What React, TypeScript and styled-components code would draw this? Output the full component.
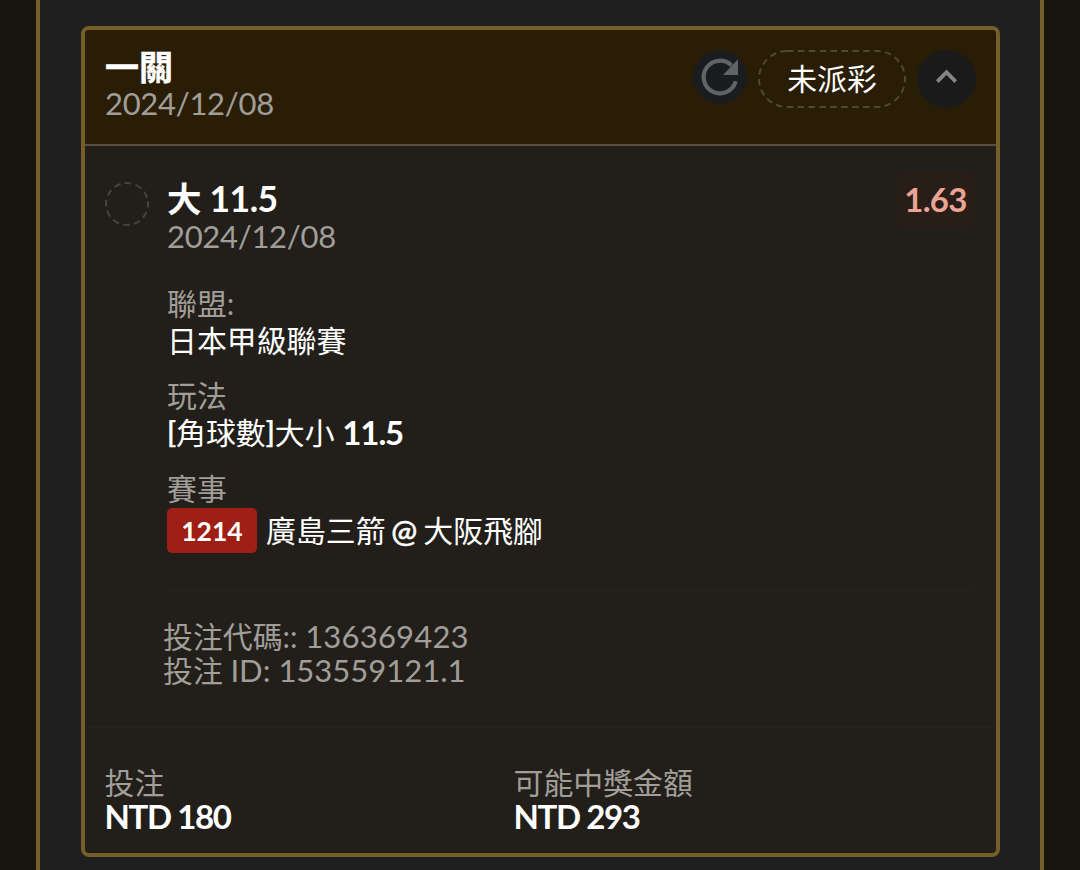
import styled, { createGlobalStyle } from 'styled-components';

const GlobalStyle = createGlobalStyle`
  * {
    box-sizing: border-box;
  }

  html,
  body {
    margin: 0;
    overflow: hidden;
    background: #17140d;
  }
`;

const Page = styled.div`
  height: 870px;
  padding: 0 36px;
  overflow: hidden;
  background: #17140d;
  color: #fff;
  font-family: Lato, 'Noto Sans CJK TC', sans-serif;
`;

const Panel = styled.main`
  height: 870px;
  padding: 26px 40px 0 41px;
  background: #1f1f1f;
  border: solid #765e2a;
  border-width: 0 4px;
`;

const Card = styled.article`
  display: flex;
  flex-direction: column;
  height: 831px;
  overflow: hidden;
  background: #221f1a;
  border: 4px solid #765e2a;
  border-radius: 8px;
`;

const CardHeader = styled.header`
  display: flex;
  justify-content: space-between;
  height: 116px;
  padding: 19px 20px 0 20px;
  background: #291e05;
  border-bottom: 2px solid #57503f;
`;

const Line = styled.div<{ $h: number; $muted?: boolean }>`
  display: flex;
  align-items: center;
  height: ${({ $h }) => $h}px;
  color: ${({ $muted }) => ($muted ? '#a19e99' : '#fff')};
  font-size: 31px;
  line-height: ${({ $h }) => $h}px;
  white-space: pre;
`;

const Title = styled.h2`
  height: 36px;
  margin: 0;
  font-size: 34px;
  font-weight: 700;
  line-height: 36px;
  -webkit-text-stroke: 0.5px #fff;
`;

const DateText = styled(Line)`
  letter-spacing: -0.3px;
`;

const Cjk = styled.span`
  font-size: 29.9px;
`;

const Medium = styled.span`
  font-size: 29.5px;
  font-weight: 500;
  -webkit-text-stroke: 0.5px #fff;
`;

const AtSign = styled(Medium)`
  margin: 0 -1.5px 0 -2px;
  font-size: 31px;
`;

const Strong = styled.strong<{ $size?: number; $spacing?: number }>`
  font-size: ${({ $size }) => $size ?? 33}px;
  font-weight: 700;
  letter-spacing: ${({ $spacing }) => $spacing ?? -1.4}px;
`;

const Actions = styled.div`
  display: flex;
  align-items: flex-start;
  padding-top: 1px;
`;

const ReloadButton = styled.button`
  width: 54px;
  height: 54px;
  margin-right: 11px;
  padding: 0;
  background: #1b1c1d;
  border: 0;
  border-radius: 50%;
`;

const StatusPill = styled.div`
  display: grid;
  width: 148px;
  height: 58px;
  margin-right: 11px;

  > * {
    grid-area: 1 / 1;
  }
`;

const StatusText = styled.span`
  font-size: 29.8px;
  line-height: 58px;
  text-align: center;
`;

const ToggleButton = styled.button`
  width: 59px;
  height: 58px;
  padding: 0;
  background: #1a1a1b;
  border: 0;
  border-radius: 50%;
`;

const Selection = styled.section`
  display: grid;
  grid-template-columns: 62px 1fr;
  height: 580px;
  padding: 34px 25px 0 20px;
`;

const Marker = styled.svg`
  display: block;
  margin-top: 2px;
`;

const SelectionHead = styled.div`
  display: flex;
  justify-content: space-between;
  height: 105px;
`;

const Odds = styled.span`
  width: 77px;
  height: 55px;
  margin: -8px -3px 0 0;
  background: #291d17;
  border-radius: 6px;
  color: #eba495;
  font-size: 33px;
  font-weight: 700;
  letter-spacing: -0.7px;
  line-height: 54px;
  text-align: center;
`;

const Field = styled.div`
  height: 92px;
`;

const MatchCode = styled.span`
  width: 90px;
  height: 45px;
  margin-right: 9px;
  background: #9f1f15;
  border-radius: 5px;
  font-size: 26.5px;
  font-weight: 700;
  line-height: 47px;
  text-align: center;
`;

const Divider = styled.hr`
  height: 2px;
  margin: 36px -1px 0 0;
  background: #25221d;
  border: 0;
`;

const TicketInfo = styled.div`
  margin: 28px 0 0 -4px;
`;

const CardFooter = styled.footer`
  display: grid;
  grid-template-columns: 409px 1fr;
  flex: 1;
  padding: 37px 20px 0 19.5px;
  border-top: 2px solid #25221d;
`;

const TicketCode = styled.span`
  letter-spacing: 0.2px;
`;

const fields = [
  { label: '聯盟:', value: <Cjk>日本甲級聯賽</Cjk> },
  {
    label: '玩法',
    value: (
      <>
        <Medium>[</Medium>
        <Cjk>角球數</Cjk>
        <Medium>]</Medium>
        <Cjk>大小 </Cjk>
        <Strong $spacing={-1.1}>11.5</Strong>
      </>
    ),
  },
];

const totals = [
  { label: '投注', value: 'NTD 180' },
  { label: '可能中獎金額', value: 'NTD 293' },
];

export default function App() {
  return (
    <>
      <GlobalStyle />
      <Page>
        <Panel>
          <Card>
            <CardHeader>
              <div>
                <Title>一關</Title>
                <DateText $h={36} $muted>2024/12/08</DateText>
              </div>
              <Actions>
                <ReloadButton aria-label="reload">
                  <svg width="54" height="54" viewBox="0 0 54 54" fill="none">
                    <path d="M42.7 31.3A16.3 16.3 0 1 1 38.5 15.5" stroke="#626365" strokeWidth="4.2" />
                    <path d="M45 9.3V25H30z" fill="#626365" />
                  </svg>
                </ReloadButton>
                <StatusPill>
                  <svg width="148" height="58" viewBox="0 0 148 58" fill="none">
                    <rect x="1" y="1" width="146" height="56" rx="28" stroke="#504735" strokeWidth="2" strokeDasharray="6.5 4.4" />
                  </svg>
                  <StatusText>未派彩</StatusText>
                </StatusPill>
                <ToggleButton aria-label="toggle">
                  <svg width="59" height="58" viewBox="0 0 59 58" fill="none">
                    <path d="M20.3 31.6l9.2-9.4 9.2 9.4" stroke="#848484" strokeWidth="3.8" />
                  </svg>
                </ToggleButton>
              </Actions>
            </CardHeader>

            <Selection>
              <Marker width="44" height="44" viewBox="0 0 44 44" fill="none">
                <circle cx="22" cy="22" r="21" stroke="#45433f" strokeWidth="2" strokeDasharray="6.6 4.4" transform="rotate(-8 22 22)" />
              </Marker>
              <div>
                <SelectionHead>
                  <div>
                    <Line $h={38}>
                      <Strong $size={34.5} $spacing={-0.2}>大 </Strong>
                      <Strong $size={35.5} $spacing={-0.5}>11.5</Strong>
                    </Line>
                    <DateText $h={36} $muted>2024/12/08</DateText>
                  </div>
                  <Odds>1.63</Odds>
                </SelectionHead>
                {fields.map(({ label, value }) => (
                  <Field key={label}>
                    <Line $h={37} $muted><Cjk>{label}</Cjk></Line>
                    <Line $h={36}>{value}</Line>
                  </Field>
                ))}
                <div>
                  <Line $h={39} $muted><Cjk>賽事</Cjk></Line>
                  <Line $h={45}>
                    <MatchCode>1214</MatchCode>
                    <Cjk>廣島三箭 </Cjk>
                    <AtSign>@</AtSign>
                    <Cjk> 大阪飛腳</Cjk>
                  </Line>
                </div>
                <Divider />
                <TicketInfo>
                  <Line $h={34} $muted><Cjk>投注代碼:: </Cjk><TicketCode>136369423</TicketCode></Line>
                  <Line $h={34} $muted><Cjk>投注 </Cjk>ID: 153559121.1</Line>
                </TicketInfo>
              </div>
            </Selection>

            <CardFooter>
              {totals.map(({ label, value }) => (
                <div key={label}>
                  <Line $h={34} $muted><Cjk>{label}</Cjk></Line>
                  <Line $h={34}><Strong>{value}</Strong></Line>
                </div>
              ))}
            </CardFooter>
          </Card>
        </Panel>
      </Page>
    </>
  );
}
